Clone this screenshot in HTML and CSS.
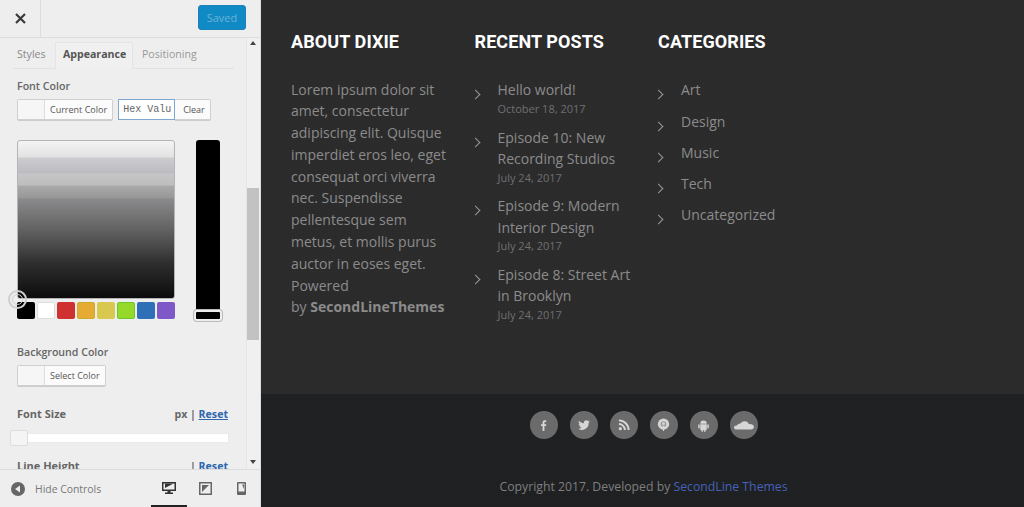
FILE: index.html
```html
<!DOCTYPE html>
<html lang="en">
<head>
<meta charset="utf-8">
<title>Dixie customizer</title>
<link rel="stylesheet" href="styles.css">
</head>
<body>
<div class="app">
  <aside class="panel">
    <header class="panel-head">
      <button class="close" aria-label="Close"><svg width="11" height="11" viewBox="0 0 11 11"><path d="M1 1l9 9M10 1l-9 9" stroke="#3a3a3a" stroke-width="2.2" fill="none"/></svg></button>
      <button class="saved">Saved</button>
    </header>
    <div class="panel-body">
      <div class="scroll-content">
        <nav class="tabs">
          <span class="tab">Styles</span>
          <span class="tab active">Appearance</span>
          <span class="tab">Positioning</span>
        </nav>
        <h4 class="label first">Font Color</h4>
        <div class="color-row">
          <div class="pick"><span class="swatch"></span><span class="pick-text">Current Color</span></div>
          <div class="hex"><span class="hex-input">Hex Valu</span><span class="hex-clear">Clear</span></div>
        </div>
        <div class="iris">
          <div class="iris-left">
            <div class="iris-square"></div>
            <div class="palette">
              <i class="c1"></i><i class="c2"></i><i class="c3"></i><i class="c4"></i><i class="c5"></i><i class="c6"></i><i class="c7"></i><i class="c8"></i>
            </div>
            <span class="iris-handle"></span>
          </div>
          <div class="iris-strip"><span class="strip-handle"></span></div>
        </div>
        <h4 class="label bg">Background Color</h4>
        <div class="color-row">
          <div class="pick"><span class="swatch"></span><span class="pick-text">Select Color</span></div>
        </div>
        <div class="field-row size"><b>Font Size</b><span class="units">px | <a>Reset</a></span></div>
        <div class="slider"><span class="thumb"></span></div>
        <div class="field-row line"><b>Line Height</b><span class="units">| <a>Reset</a></span></div>
      </div>
      <div class="scrollbar">
        <span class="arrow up"></span>
        <div class="track"><span class="bar"></span></div>
        <span class="arrow down"></span>
      </div>
    </div>
    <footer class="panel-foot">
      <div class="hide"><svg width="14" height="14" viewBox="0 0 14 14"><circle cx="7" cy="7" r="7" fill="#666"/><path d="M9 3.5v7L4 7z" fill="#eee"/></svg><span>Hide Controls</span></div>
      <div class="devices">
        <span class="device on"><svg width="14" height="14" viewBox="0 0 14 14"><path d="M0 1h14v9H8.500v1.500H11V13H3v-1.500h2.500V10H0z" fill="#333"/><path d="M1.500 2.500h11v6h-11z" fill="#eee"/><path d="M3 2.500h8.500L3 7z" fill="#333"/></svg></span>
        <span class="device"><svg width="13" height="13" viewBox="0 0 13 13"><path d="M0 0h13v13H0z" fill="#666"/><path d="M1.500 1.500h10v10h-10z" fill="#eee"/><path d="M3 3h7L3 10z" fill="#666"/></svg></span>
        <span class="device"><svg width="9" height="13" viewBox="0 0 9 13"><rect width="9" height="13" rx="1" fill="#666"/><path d="M1.500 1.500h6v8h-6z" fill="#eee"/><path d="M5 2.500h2v4.500z" fill="#666"/></svg></span>
      </div>
    </footer>
  </aside>
  <main class="site">
    <section class="widgets">
      <div class="col">
        <h3>ABOUT DIXIE</h3>
        <p class="about">Lorem ipsum dolor sit amet, consectetur adipiscing elit. Quisque imperdiet eros leo, eget consequat orci viverra nec. Suspendisse pellentesque sem metus, et mollis purus auctor in eoses eget. Powered<br>by <strong>SecondLineThemes</strong></p>
      </div>
      <div class="col">
        <h3>RECENT POSTS</h3>
        <ul class="posts">
          <li><a>Hello world!</a><time>October 18, 2017</time></li>
          <li><a>Episode 10: New Recording Studios</a><time>July 24, 2017</time></li>
          <li><a>Episode 9: Modern Interior Design</a><time>July 24, 2017</time></li>
          <li><a>Episode 8: Street Art in Brooklyn</a><time>July 24, 2017</time></li>
        </ul>
      </div>
      <div class="col">
        <h3>CATEGORIES</h3>
        <ul class="cats">
          <li>Art</li><li>Design</li><li>Music</li><li>Tech</li><li>Uncategorized</li>
        </ul>
      </div>
    </section>
    <section class="bottom">
      <div class="social">
        <span><svg width="13" height="13" viewBox="0 0 14 14"><path d="M8 13V7.600h1.700l.3-2H8V4.300c0-.6.200-1 1-1h1V1.500C9.700 1.500 9.200 1.400 8.600 1.400 7 1.400 6 2.300 6 4v1.600H4.300v2H6V13z" fill="#d6d6d6"/></svg></span>
        <span><svg width="14" height="14" viewBox="0 0 24 24"><path d="M22 5.900c-.7.300-1.500.5-2.400.6.900-.5 1.500-1.300 1.800-2.300-.8.500-1.700.8-2.600 1a4.100 4.100 0 0 0-7 3.700C8.400 8.800 5.400 7.100 3.400 4.700c-1.100 1.900-.5 4.300 1.300 5.500-.7 0-1.300-.2-1.900-.5 0 2 1.400 3.700 3.300 4.100-.6.200-1.200.2-1.900.1.500 1.600 2 2.800 3.800 2.800A8.300 8.300 0 0 1 2 18.400 11.600 11.600 0 0 0 20 8.100c.8-.6 1.500-1.300 2-2.200z" fill="#d6d6d6"/></svg></span>
        <span><svg width="12" height="12" viewBox="0 0 13 13"><circle cx="2.500" cy="10.500" r="1.700" fill="#d6d6d6"/><path d="M1 5.500a6.500 6.500 0 0 1 6.500 6.500M1 1.500A10.500 10.500 0 0 1 11.500 12" stroke="#d6d6d6" stroke-width="2.100" fill="none"/></svg></span>
        <span><svg width="13" height="14" viewBox="0 0 15 15"><circle cx="7.500" cy="6.500" r="6.500" fill="#d6d6d6"/><circle cx="7.500" cy="6.500" r="3.200" fill="#999"/><circle cx="7.500" cy="6" r="1.600" fill="#d6d6d6"/><path d="M6.300 8.500h2.400L8 14.500H7z" fill="#d6d6d6"/></svg></span>
        <span><svg width="13" height="13" viewBox="0 0 14 14"><path d="M3.500 5a3.500 3.300 0 0 1 7 0zM3.500 5.600h7v5.400a1 1 0 0 1-1 1h-5a1 1 0 0 1-1-1z" fill="#d6d6d6"/><rect x="1.300" y="5.600" width="1.600" height="4.600" rx=".8" fill="#d6d6d6"/><rect x="11.100" y="5.600" width="1.600" height="4.600" rx=".8" fill="#d6d6d6"/><rect x="4.800" y="11" width="1.500" height="3" rx=".7" fill="#d6d6d6"/><rect x="7.700" y="11" width="1.500" height="3" rx=".7" fill="#d6d6d6"/></svg></span>
        <span><svg width="20" height="9" viewBox="0 0 20 11" preserveAspectRatio="none"><path d="M2.500 10.500C1 10.500 0 9.400 0 8s1-2.500 2.500-2.500c.2 0 .4 0 .6.100C3.500 3.800 5 2.800 6.500 3c.5-1.600 2-2.800 4-2.800 2.200 0 4 1.500 4.300 3.700.3 0 .5-.1.800-.1 2.400 0 4.400 1.500 4.400 3.400s-2 3.300-4.400 3.300z" fill="#d6d6d6"/></svg></span>
      </div>
      <p class="copyright">Copyright 2017. Developed by <a>SecondLine Themes</a></p>
    </section>
  </main>
</div>
</body>
</html>
```
FILE: styles.css
```css
* { box-sizing: border-box; }
html, body { margin: 0; height: 100%; overflow: hidden; }
body { font-family: "Open Sans", "Liberation Sans", sans-serif; }
.app { display: flex; width: 1024px; height: 507px; }

.panel { width: 261px; height: 507px; background: #eeeeee; border-right: 1px solid #ddd; display: flex; flex-direction: column; flex: none; }
.panel-head { height: 38px; flex: none; display: flex; justify-content: space-between; align-items: flex-start; border-bottom: 1px solid #ddd; padding-right: 14px; }
.close { width: 41px; height: 37px; background: none; border: 0; border-right: 1px solid #ddd; padding: 0; display: flex; align-items: center; justify-content: center; }
.saved { margin-top: 5px; width: 48px; height: 25px; background: #0f8ac5; border: 1px solid #1a82b8; border-radius: 3px; color: #6cb2d8; font: 11px "Open Sans", sans-serif; padding: 0; }

.panel-body { flex: 1; min-height: 0; display: flex; overflow: hidden; }
.scroll-content { width: 246px; flex: none; padding: 0 17px; overflow: hidden; }
.scrollbar { width: 14px; flex: none; display: flex; flex-direction: column; background: #f0f0f0; border-left: 1px solid #e6e6e6; }
.track { flex: 1; padding-top: 138px; padding-right: 1px; }
.bar { display: block; height: 152px; background: #c2c2c2; }
.arrow { height: 12px; flex: none; position: relative; }
.arrow::after { content: ""; position: absolute; left: 3px; top: 3px; border: 3px solid transparent; }
.arrow.up::after { border-bottom: 4px solid #444; border-top: 0; }
.arrow.down::after { border-top: 4px solid #444; border-bottom: 0; }

.tabs { display: flex; height: 27px; margin: 4px 0 0 -4px; width: 221px; border-bottom: 1px solid #e2e2e2; font-size: 10.600px; line-height: 15px; color: #888; }
.tab { padding: 5px 4px 0; height: 27px; }
.tab:first-child { width: 42px; }
.tab.active { width: 78px; font-weight: 700; color: #555; background: #f0f0f0; border: 1px solid #e4e4e4; border-bottom: 0; padding-top: 4px; padding-left: 7px; white-space: nowrap; }
.tab:last-child { padding-left: 9px; color: #999; }

.label { margin: 0; font-size: 10.600px; font-weight: 600; color: #666; line-height: 15px; }
.label.first { margin-top: 10px; }
.label.bg { margin-top: 23px; }
.color-row { display: flex; gap: 5px; margin-top: 5px; height: 21px; }
.pick { display: flex; height: 21px; background: #f8f8f8; border: 1px solid #d0d0d0; border-radius: 2px; box-shadow: 0 1px 0 #ccc; font-size: 9px; color: #555; }
.swatch { width: 27px; border-right: 1px solid #ddd; background: #f6f6f6; }
.pick-text { padding: 3px 5px 0; white-space: nowrap; background: #fbfbfb; }
.hex { display: flex; height: 21px; }
.hex-input { width: 57px; background: #fff; border: 1px solid #7ea8d0; font: 10px/12px "Liberation Mono", monospace; color: #666; padding: 4px 0 0 4px; white-space: nowrap; overflow: hidden; }
.hex-clear { width: 36px; background: #fbfbfb; border: 1px solid #d0d0d0; border-left: 0; border-radius: 0 2px 2px 0; font-size: 9px; color: #555; padding: 3px 0 0 8px; box-shadow: 0 1px 0 #ccc; }

.iris { display: flex; margin-top: 20px; height: 182px; }
.iris-left { position: relative; width: 158px; }
.iris-square { height: 159px; border: 1px solid #b4b4b4; border-radius: 3px; background: linear-gradient(#f4f4f4 0%, #e2e2e2 10%, #cdcdd0 11%, #c4c4c8 16%, #bcbcc0 20%, #c6c6c8 21%, #bdbdbd 28%, #a8a8a8 29%, #989898 36%, #8a8a8c 37%, #5a5a5a 60%, #2e2e2e 78%, #0c0c0c 100%); }
.palette { display: flex; justify-content: space-between; margin: 3px 0 0 -0.500px; }
.palette i { display: block; width: 18px; height: 17px; border-radius: 2px; }
.c1 { background: #000; }
.c2 { background: #fff; border: 1px solid #ddd; }
.c3 { background: #cf3030; }
.c4 { background: #e5ab32; border: 1px solid #ccab2a; }
.c5 { background: #d9c850; }
.c6 { background: #95d92a; border: 1px solid #6cc72a; }
.c7 { background: #2e6fb8; }
.c8 { background: #7f58c8; }
.iris-handle { position: absolute; left: -9px; top: 150px; width: 19px; height: 19px; border-radius: 50%; border: 2px solid #cfcfcf; background: transparent; }
.iris-handle::after { content: ""; position: absolute; inset: 2px; border-radius: 50%; border: 1.500px solid #cfcfcf; }
.iris-strip { position: relative; width: 24px; height: 171px; margin-left: 21px; background: #000; border-radius: 3px; }
.strip-handle { position: absolute; left: -2px; bottom: -10px; width: 28px; height: 11px; background: #000; border: 2px solid #eee; border-radius: 3px; box-shadow: 0 0 0 1px #bbb; }

.field-row { display: flex; justify-content: space-between; align-items: baseline; width: 211px; font-size: 11px; color: #666; line-height: 15px; }
.field-row b { font-weight: 700; }
.units { font-weight: 700; font-size: 10.600px; }
.units a { color: #2e67ae; font-weight: 700; text-decoration: underline; }
.field-row.size { margin-top: 20px; }
.slider { position: relative; width: 212px; height: 10px; margin-top: 11px; background: #fff; border: 1px solid #eaeaea; }
.thumb { position: absolute; left: -8px; top: -4px; width: 18px; height: 16px; background: #f4f4f4; border: 1px solid #ddd; border-radius: 2px; }
.field-row.line { margin-top: 15px; }
.field-row.line a { text-decoration: none; }

.panel-foot { height: 38px; flex: none; display: flex; justify-content: space-between; border-top: 1px solid #ddd; position: relative; }
.hide { display: flex; align-items: center; gap: 10px; padding: 1px 0 0 11px; font-size: 10.400px; color: #777; }
.devices { display: flex; padding-right: 1px; }
.device { width: 36px; height: 37px; display: flex; align-items: center; justify-content: center; }
.device.on { border-bottom: 2px solid #222; }

.site { flex: 1; min-width: 0; display: flex; flex-direction: column; background: #1f2022 radial-gradient(rgba(255,255,255,.015) 1px, transparent 1px) 0 0 / 3px 3px; }
.widgets { height: 394px; flex: none; background: #2b2b2c radial-gradient(rgba(255,255,255,.015) 1px, transparent 1px) 0 0 / 3px 3px; display: grid; grid-template-columns: 183.500px 183.500px 183.500px; padding: 30.500px 0 0 30px; align-content: start; }
.col h3 { margin: 0; font: 700 18px/21px Roboto, sans-serif; color: #fff; letter-spacing: .1px; }
.about { margin: 27px 0 0; width: 160px; font-size: 14px; line-height: 21.800px; color: #8b8b8b; }
.about strong { font-weight: 700; color: #8b8b8b; }
.posts, .cats { list-style: none; margin: 27.900px 0 0; padding: 0; }
.posts li, .cats li { position: relative; padding-left: 23px; font-size: 14px; color: #8b8b8b; }
.posts li::before, .cats li::before { content: ""; position: absolute; left: -3px; top: 12px; width: 6px; height: 6px; border-top: 1.500px solid #999; border-right: 1.500px solid #999; transform: rotate(45deg); }
.posts li { width: 165px; line-height: 21.500px; margin-bottom: 10.700px; }
.posts a { display: block; }
.posts time { display: block; font-size: 11px; line-height: 15px; color: #6f6f6f; }
.cats li { line-height: 21.500px; margin-bottom: 9.700px; }

.bottom { flex: 1; display: flex; flex-direction: column; align-items: center; padding-left: 2px; }
.social { display: flex; gap: 12px; margin-top: 17px; }
.social span { width: 28px; height: 28px; border-radius: 50%; background: #6b6b6b; display: flex; align-items: center; justify-content: center; }
.copyright { margin: 39px 0 0; font-size: 12.250px; line-height: 18px; color: #7f7f7f; }
.copyright a { color: #4561b8; }
```
